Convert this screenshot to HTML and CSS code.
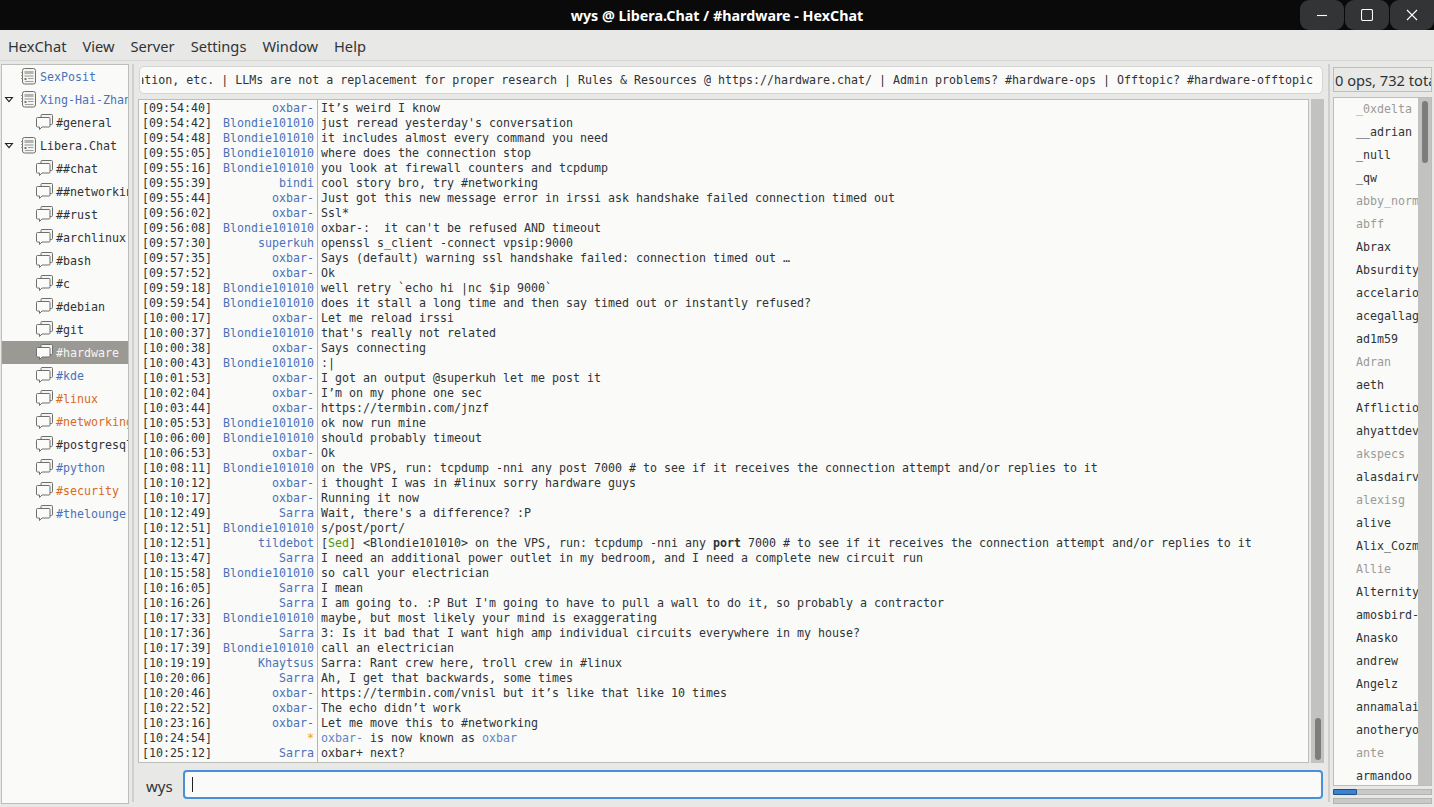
FILE: index.html
```html
<!DOCTYPE html>
<html lang="en">
<head>
<meta charset="utf-8">
<title>wys @ Libera.Chat / #hardware - HexChat</title>
<link rel="stylesheet" href="styles.css">
</head>
<body>
<svg class="defs" width="0" height="0" aria-hidden="true">
  <symbol id="srv" viewBox="0 0 15 17">
    <rect x="1.500" y="0.500" width="13" height="15.500" rx="2" fill="#f4f4f2" stroke="#6f6f6c"/>
    <path d="M0 4.500h1.500M0 7.500h1.500M0 10.500h1.500" stroke="#9a9a97"/>
    <rect x="3.500" y="3" width="9" height="3" fill="#b4b4b1"/>
    <rect x="3.500" y="7" width="9" height="2" fill="#c4c4c1"/>
    <rect x="3.500" y="10" width="2" height="2" fill="#777"/>
    <path d="M7 10.500h5.500M4 13.500h8.500" stroke="#a0a09d"/>
  </symbol>
  <symbol id="chn" viewBox="0 0 17 17">
    <path d="M5 3V1.500q0-1 1-1h9.500q1 0 1 1v8q0 1-1 1H14" fill="#f4f4f2" stroke="#6f6f6c"/>
    <path d="M1.500 3.500h11.500q1 0 1 1v7.500q0 1-1 1H6L3.500 15.500V13h-2q-1 0-1-1V4.500q0-1 1-1z" fill="#fbfbfa" stroke="#6f6f6c"/>
  </symbol>
</svg>

<header class="titlebar">
  <span class="title">wys @ Libera.Chat / #hardware - HexChat</span>
  <div class="winctl">
    <span class="winbtn"><svg width="12" height="12" viewBox="0 0 12 12"><path d="M1 6.500h10" stroke="#fff" stroke-width="1.100"/></svg></span>
    <span class="winbtn"><svg width="12" height="12" viewBox="0 0 12 12"><rect x="0.500" y="0.500" width="11" height="11" rx="1.500" fill="none" stroke="#fff" stroke-width="1.100"/></svg></span>
    <span class="winbtn"><svg width="12" height="12" viewBox="0 0 12 12"><path d="M1 1l10 10M11 1L1 11" stroke="#fff" stroke-width="1.100"/></svg></span>
  </div>
</header>

<nav class="menubar">
  <span>HexChat</span><span>View</span><span>Server</span><span>Settings</span><span>Window</span><span>Help</span>
</nav>

<main class="main">
  <aside class="tree">
    <div class="node srv"><i class="arrow none"></i><svg class="ico"><use href="#srv"/></svg><span class="name c-blue">SexPosit</span></div>
    <div class="node srv"><i class="arrow"></i><svg class="ico"><use href="#srv"/></svg><span class="name c-blue">Xing-Hai-Zhang</span></div>
    <div class="node chan"><svg class="ico"><use href="#chn"/></svg><span class="name">#general</span></div>
    <div class="node srv"><i class="arrow"></i><svg class="ico"><use href="#srv"/></svg><span class="name">Libera.Chat</span></div>
    <div class="node chan"><svg class="ico"><use href="#chn"/></svg><span class="name">##chat</span></div>
    <div class="node chan"><svg class="ico"><use href="#chn"/></svg><span class="name">##networking</span></div>
    <div class="node chan"><svg class="ico"><use href="#chn"/></svg><span class="name">##rust</span></div>
    <div class="node chan"><svg class="ico"><use href="#chn"/></svg><span class="name">#archlinux</span></div>
    <div class="node chan"><svg class="ico"><use href="#chn"/></svg><span class="name">#bash</span></div>
    <div class="node chan"><svg class="ico"><use href="#chn"/></svg><span class="name">#c</span></div>
    <div class="node chan"><svg class="ico"><use href="#chn"/></svg><span class="name">#debian</span></div>
    <div class="node chan"><svg class="ico"><use href="#chn"/></svg><span class="name">#git</span></div>
    <div class="node chan selected"><svg class="ico"><use href="#chn"/></svg><span class="name">#hardware</span></div>
    <div class="node chan"><svg class="ico"><use href="#chn"/></svg><span class="name c-blue">#kde</span></div>
    <div class="node chan"><svg class="ico"><use href="#chn"/></svg><span class="name c-orange">#linux</span></div>
    <div class="node chan"><svg class="ico"><use href="#chn"/></svg><span class="name c-orange">#networking</span></div>
    <div class="node chan"><svg class="ico"><use href="#chn"/></svg><span class="name">#postgresql</span></div>
    <div class="node chan"><svg class="ico"><use href="#chn"/></svg><span class="name c-blue">#python</span></div>
    <div class="node chan"><svg class="ico"><use href="#chn"/></svg><span class="name c-orange">#security</span></div>
    <div class="node chan"><svg class="ico"><use href="#chn"/></svg><span class="name c-blue">#thelounge</span></div>
  </aside>

  <div class="vsep"></div>

  <section class="center">
    <div class="topic"><div class="topicclip"><span>Hardware discussion, builds, recommendations, information, etc. | LLMs are not a replacement for proper research | Rules &amp; Resources @ https://hardware.chat/ | Admin problems? #hardware-ops | Offtopic? #hardware-offtopic</span></div></div>
    <div class="chatwrap">
      <div class="log">
        <div class="row"><span class="t">[09:54:40]</span><span class="n">oxbar-</span><span class="m">It’s weird I know</span></div>
        <div class="row"><span class="t">[09:54:42]</span><span class="n">Blondie101010</span><span class="m">just reread yesterday's conversation</span></div>
        <div class="row"><span class="t">[09:54:48]</span><span class="n">Blondie101010</span><span class="m">it includes almost every command you need</span></div>
        <div class="row"><span class="t">[09:55:05]</span><span class="n">Blondie101010</span><span class="m">where does the connection stop</span></div>
        <div class="row"><span class="t">[09:55:16]</span><span class="n">Blondie101010</span><span class="m">you look at firewall counters and tcpdump</span></div>
        <div class="row"><span class="t">[09:55:39]</span><span class="n">bindi</span><span class="m">cool story bro, try #networking</span></div>
        <div class="row"><span class="t">[09:55:44]</span><span class="n">oxbar-</span><span class="m">Just got this new message error in irssi ask handshake failed connection timed out</span></div>
        <div class="row"><span class="t">[09:56:02]</span><span class="n">oxbar-</span><span class="m">Ssl*</span></div>
        <div class="row"><span class="t">[09:56:08]</span><span class="n">Blondie101010</span><span class="m">oxbar-:  it can't be refused AND timeout</span></div>
        <div class="row"><span class="t">[09:57:30]</span><span class="n">superkuh</span><span class="m">openssl s_client -connect vpsip:9000</span></div>
        <div class="row"><span class="t">[09:57:35]</span><span class="n">oxbar-</span><span class="m">Says (default) warning ssl handshake failed: connection timed out …</span></div>
        <div class="row"><span class="t">[09:57:52]</span><span class="n">oxbar-</span><span class="m">Ok</span></div>
        <div class="row"><span class="t">[09:59:18]</span><span class="n">Blondie101010</span><span class="m">well retry `echo hi |nc $ip 9000`</span></div>
        <div class="row"><span class="t">[09:59:54]</span><span class="n">Blondie101010</span><span class="m">does it stall a long time and then say timed out or instantly refused?</span></div>
        <div class="row"><span class="t">[10:00:17]</span><span class="n">oxbar-</span><span class="m">Let me reload irssi</span></div>
        <div class="row"><span class="t">[10:00:37]</span><span class="n">Blondie101010</span><span class="m">that's really not related</span></div>
        <div class="row"><span class="t">[10:00:38]</span><span class="n">oxbar-</span><span class="m">Says connecting</span></div>
        <div class="row"><span class="t">[10:00:43]</span><span class="n">Blondie101010</span><span class="m">:|</span></div>
        <div class="row"><span class="t">[10:01:53]</span><span class="n">oxbar-</span><span class="m">I got an output @superkuh let me post it</span></div>
        <div class="row"><span class="t">[10:02:04]</span><span class="n">oxbar-</span><span class="m">I’m on my phone one sec</span></div>
        <div class="row"><span class="t">[10:03:44]</span><span class="n">oxbar-</span><span class="m">https://termbin.com/jnzf</span></div>
        <div class="row"><span class="t">[10:05:53]</span><span class="n">Blondie101010</span><span class="m">ok now run mine</span></div>
        <div class="row"><span class="t">[10:06:00]</span><span class="n">Blondie101010</span><span class="m">should probably timeout</span></div>
        <div class="row"><span class="t">[10:06:53]</span><span class="n">oxbar-</span><span class="m">Ok</span></div>
        <div class="row"><span class="t">[10:08:11]</span><span class="n">Blondie101010</span><span class="m">on the VPS, run: tcpdump -nni any post 7000 # to see if it receives the connection attempt and/or replies to it</span></div>
        <div class="row"><span class="t">[10:10:12]</span><span class="n">oxbar-</span><span class="m">i thought I was in #linux sorry hardware guys</span></div>
        <div class="row"><span class="t">[10:10:17]</span><span class="n">oxbar-</span><span class="m">Running it now</span></div>
        <div class="row"><span class="t">[10:12:49]</span><span class="n">Sarra</span><span class="m">Wait, there's a difference? :P</span></div>
        <div class="row"><span class="t">[10:12:51]</span><span class="n">Blondie101010</span><span class="m">s/post/port/</span></div>
        <div class="row"><span class="t">[10:12:51]</span><span class="n">tildebot</span><span class="m">[<span class="green">Sed</span>] &lt;Blondie101010&gt; on the VPS, run: tcpdump -nni any <b>port</b> 7000 # to see if it receives the connection attempt and/or replies to it</span></div>
        <div class="row"><span class="t">[10:13:47]</span><span class="n">Sarra</span><span class="m">I need an additional power outlet in my bedroom, and I need a complete new circuit run</span></div>
        <div class="row"><span class="t">[10:15:58]</span><span class="n">Blondie101010</span><span class="m">so call your electrician</span></div>
        <div class="row"><span class="t">[10:16:05]</span><span class="n">Sarra</span><span class="m">I mean</span></div>
        <div class="row"><span class="t">[10:16:26]</span><span class="n">Sarra</span><span class="m">I am going to. :P But I'm going to have to pull a wall to do it, so probably a contractor</span></div>
        <div class="row"><span class="t">[10:17:33]</span><span class="n">Blondie101010</span><span class="m">maybe, but most likely your mind is exaggerating</span></div>
        <div class="row"><span class="t">[10:17:36]</span><span class="n">Sarra</span><span class="m">3: Is it bad that I want high amp individual circuits everywhere in my house?</span></div>
        <div class="row"><span class="t">[10:17:39]</span><span class="n">Blondie101010</span><span class="m">call an electrician</span></div>
        <div class="row"><span class="t">[10:19:19]</span><span class="n">Khaytsus</span><span class="m">Sarra: Rant crew here, troll crew in #linux</span></div>
        <div class="row"><span class="t">[10:20:06]</span><span class="n">Sarra</span><span class="m">Ah, I get that backwards, some times</span></div>
        <div class="row"><span class="t">[10:20:46]</span><span class="n">oxbar-</span><span class="m">https://termbin.com/vnisl but it’s like that like 10 times</span></div>
        <div class="row"><span class="t">[10:22:52]</span><span class="n">oxbar-</span><span class="m">The echo didn’t work</span></div>
        <div class="row"><span class="t">[10:23:16]</span><span class="n">oxbar-</span><span class="m">Let me move this to #networking</span></div>
        <div class="row"><span class="t">[10:24:54]</span><span class="n star">*</span><span class="m"><span class="nickref">oxbar-</span> is now known as <span class="nickref">oxbar</span></span></div>
        <div class="row"><span class="t">[10:25:12]</span><span class="n">Sarra</span><span class="m">oxbar+ next?</span></div>
      </div>
      <div class="vscroll chatscroll"><div class="thumb"></div></div>
    </div>
    <div class="inputrow">
      <span class="me">wys</span>
      <div class="entry"><i class="caret"></i></div>
    </div>
  </section>

  <div class="vsep"></div>

  <aside class="users">
    <div class="count"><span>0 ops, 732 total</span></div>
    <div class="userwrap">
      <div class="userlist">
        <div class="u away">_0xdelta</div>
        <div class="u">__adrian</div>
        <div class="u">_null</div>
        <div class="u">_qw</div>
        <div class="u away">abby_norm</div>
        <div class="u away">abff</div>
        <div class="u">Abrax</div>
        <div class="u">Absurdity</div>
        <div class="u">accelarion</div>
        <div class="u">acegallagher</div>
        <div class="u">ad1m59</div>
        <div class="u away">Adran</div>
        <div class="u">aeth</div>
        <div class="u">Affliction</div>
        <div class="u">ahyattdev</div>
        <div class="u away">akspecs</div>
        <div class="u">alasdairv</div>
        <div class="u away">alexisg</div>
        <div class="u">alive</div>
        <div class="u">Alix_Cozmo</div>
        <div class="u away">Allie</div>
        <div class="u">Alternity</div>
        <div class="u">amosbird-</div>
        <div class="u">Anasko</div>
        <div class="u">andrew</div>
        <div class="u">Angelz</div>
        <div class="u">annamalai</div>
        <div class="u">anotheryou</div>
        <div class="u away">ante</div>
        <div class="u">armandoo</div>
      </div>
      <div class="vscroll userscroll"><div class="thumb"></div></div>
    </div>
    <div class="lag"><div class="lagfill"></div></div>
    <div class="lag"></div>
  </aside>
</main>
</body>
</html>
```
FILE: styles.css
```css
* { box-sizing: border-box; }
html, body { margin: 0; height: 100%; }
body {
  width: 1434px; height: 807px; overflow: hidden;
  background: #e8e8e7; color: #2e3436;
  font-family: "Noto Sans", sans-serif;
  display: flex; flex-direction: column;
}
.defs { position: absolute; }

.titlebar {
  height: 30px; flex: none; background: #0a0a0a; position: relative;
  display: flex; align-items: center; justify-content: center;
}
.title { color: #fff; font-size: 14.3px; font-weight: 700; }
.winctl { position: absolute; top: 0; right: 0; display: flex; gap: 1px; }
.winbtn {
  width: 44px; height: 30px; background: #333436;
  display: flex; align-items: center; justify-content: center;
  border-radius: 9px;
}
.winctl .winbtn:last-child { border-top-right-radius: 0; }

.menubar {
  height: 31px; flex: none; background: #e8e8e7; border-bottom: 1px solid #d6d6d4;
  display: flex; align-items: center; gap: 16px; padding: 2px 0 0 8px;
  font-size: 14.67px; color: #2e3436;
}

.main { flex: 1; min-height: 0; display: flex; padding: 3px 1px 3px 1px; }

.tree {
  width: 128px; flex: none; background: #fafaf9; border: 1px solid #bdbdba;
  overflow: hidden;
  font-family: "DejaVu Sans Mono", monospace; font-size: 11.63px; color: #2e3436;
}
.node { height: 23px; display: flex; align-items: center; white-space: nowrap; overflow: hidden; }
.srv { padding-left: 2px; }
.chan { padding-left: 34px; }
.srv .ico { margin-left: 7px; width: 15px; height: 17px; flex: none; }
.chan .ico { width: 17px; height: 17px; flex: none; }
.name { margin-left: 4px; }
.chan .name { margin-left: 3px; }
.arrow {
  width: 10px; height: 6px; flex: none; position: relative;
  clip-path: polygon(0 0, 100% 0, 50% 100%);
  background: #222;
}
.arrow::after {
  content: ""; position: absolute; left: 2.500px; top: 1.200px; width: 5px; height: 3px;
  background: #fafaf9; clip-path: polygon(0 0, 100% 0, 50% 100%);
}
.arrow.none { visibility: hidden; }
.selected { background: #9a9994; color: #f5f5f3; }
.c-blue { color: #4a72b8; }
.c-orange { color: #d96a1e; }

.vsep { width: 2px; flex: none; margin: 0 3px 2px 3px; background: #cfcfcd; }

.center { width: 1188px; flex: none; display: flex; flex-direction: column; padding-left: 1px; }
.topic {
  height: 28px; flex: none; margin: 2px 2px 0 1px; padding: 0 9px 1px 2px;
  background: #fafaf9; border: 1px solid #d4d4d2; border-radius: 5px;
  display: flex; align-items: center;
  font-family: "DejaVu Sans Mono", monospace; font-size: 11.63px; color: #2e3436;
}
.topicclip { flex: 1; min-width: 0; display: flex; justify-content: flex-end; overflow: hidden; white-space: nowrap; }
.topicclip span { flex: none; }
.chatwrap { height: 664px; flex: none; margin-top: 5px; display: flex; gap: 2px; padding-right: 1px; }
.log {
  width: 1171px; flex: none; padding-top: 1px; overflow: hidden;
  background: linear-gradient(#b4b4b2, #b4b4b2) 178px 0 / 1px 100% no-repeat #fafaf9;
  border: 1px solid #bdbdba;
  font-family: "DejaVu Sans Mono", monospace; font-size: 11.63px; line-height: 15px; color: #2e3436;
}
.row { height: 15px; display: flex; white-space: pre; }
.t { width: 72px; flex: none; margin-left: 3px; }
.n { width: 100px; flex: none; text-align: right; color: #4a72b8; }
.n.star { color: #e5a50a; }
.m { margin-left: 4px; padding-left: 3px; }
.green { color: #4e9a06; }
.nickref { color: #5f86c4; }

.vscroll { background: #c2c3c1; position: relative; flex: none; }
.thumb { position: absolute; background: #7c7d7c; border-radius: 4px; }
.chatscroll { width: 13px; }
.chatscroll .thumb { left: 4px; width: 6px; height: 42px; bottom: 3px; }

.inputrow { flex: 1; display: flex; align-items: flex-start; gap: 9px; padding: 7px 2px 0 8px; }
.me { width: 28px; flex: none; font-size: 15px; line-height: 32px; color: #2e3436; }
.entry {
  flex: 1; height: 29px; background: #fafaf9; border: 2px solid #4a90d9; border-radius: 4px;
  display: flex; align-items: center; padding-left: 7px;
}
.caret { width: 1px; height: 15px; background: #222; }

.users { width: 99px; flex: none; display: flex; flex-direction: column; }
.count {
  height: 25px; flex: none; margin-top: 3px; padding: 0 1px; overflow: hidden; white-space: nowrap;
  border: 1px solid #bdbdba; display: flex; align-items: center; font-size: 14.67px; color: #2e3436;
}
.userwrap { height: 689px; flex: none; margin-top: 5px; display: flex; border: 1px solid #bdbdba; }
.userlist {
  flex: 1; min-width: 0; overflow: hidden; background: #fafaf9;
  font-family: "DejaVu Sans Mono", monospace; font-size: 11.63px; color: #2e3436;
}
.u { height: 23px; line-height: 23px; padding-left: 22px; white-space: nowrap; overflow: hidden; }
.u.away { color: #9a9a98; }
.userscroll { width: 13px; }
.userscroll .thumb { left: 4px; width: 6px; top: 3px; height: 62px; }
.lag { height: 6px; flex: none; margin-top: 3px; background: #c9c9c7; border: 1px solid #b4b4b2; position: relative; }
.lagfill { position: absolute; left: -1px; top: -1px; bottom: -1px; width: 24px; background: #3d82d0; border: 1px solid #1f4f86; border-radius: 1px; }
```
